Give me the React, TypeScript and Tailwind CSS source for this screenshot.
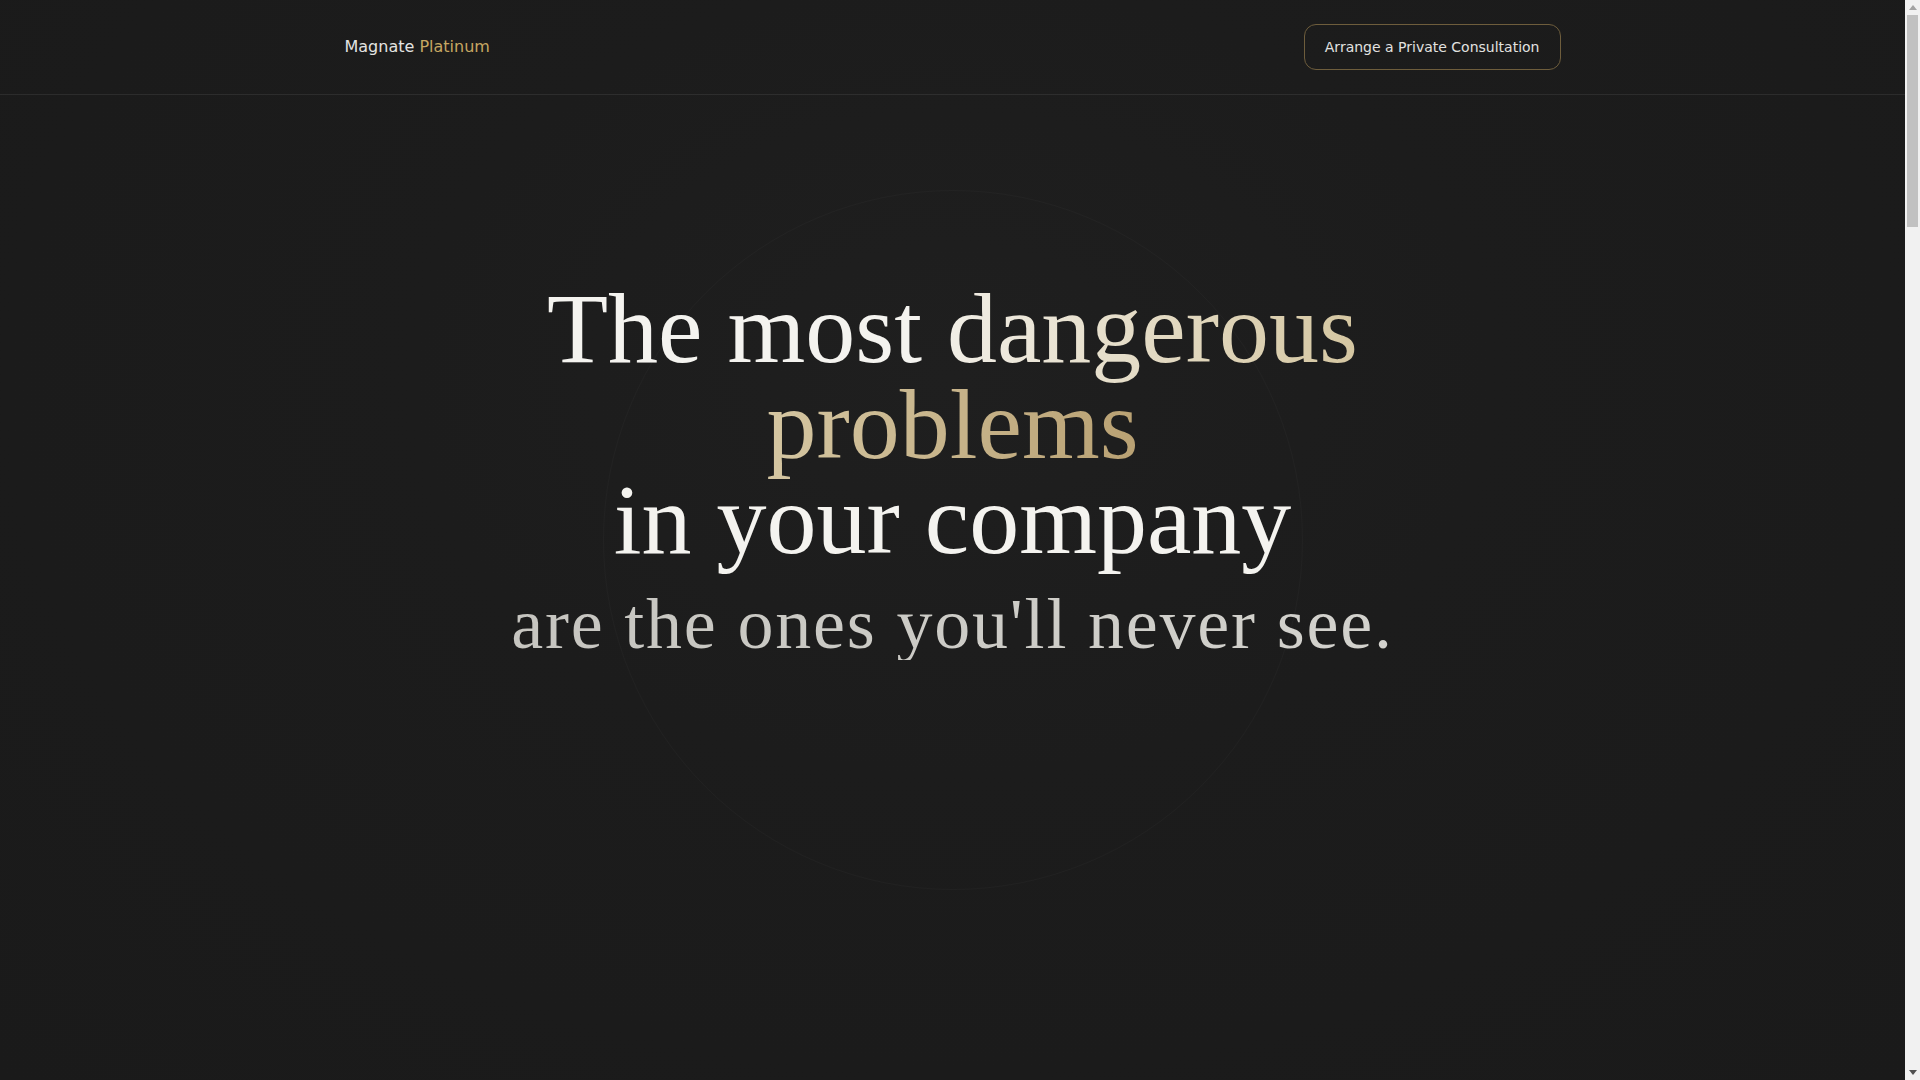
import React from "react";

function FakeScrollbar() {
  return (
    <div className="flex h-screen w-[15px] shrink-0 flex-col bg-[#f1f1f1]">
      <div className="flex h-[15px] items-center justify-center">
        <svg width="8" height="5" viewBox="0 0 8 5">
          <path d="M0 5 L4 0 L8 5 Z" fill="#a3a3a3" />
        </svg>
      </div>
      <div className="mx-[2px] h-[212px] bg-[#c1c1c1]" />
      <div className="flex-1" />
      <div className="flex h-[15px] items-center justify-center">
        <svg width="8" height="5" viewBox="0 0 8 5">
          <path d="M0 0 L8 0 L4 5 Z" fill="#505050" />
        </svg>
      </div>
    </div>
  );
}

export default function App() {
  return (
    <div className="flex h-screen overflow-hidden bg-[#1b1b1b]">
      <div className="relative h-screen flex-1 overflow-hidden">
        {/* soft radial light */}
        <div className="pointer-events-none absolute inset-0 bg-[radial-gradient(ellipse_at_50%_35%,#1f1f1f_0%,#1c1c1c_40%,#1a1a1a_100%)]" />
        {/* decorative ring */}
        <div className="pointer-events-none absolute left-1/2 top-[190px] h-[700px] w-[700px] -translate-x-1/2 rounded-full border border-white/[0.022]" />

        <header className="relative z-10 border-b border-white/[0.08] font-['DejaVu_Sans',sans-serif]">
          <div className="mx-auto flex h-[94px] max-w-7xl items-center justify-between px-8">
            <div className="text-base text-[#e4e4e2]">
              Magnate <span className="text-[#c6a762]">Platinum</span>
            </div>
            <button className="rounded-xl border border-[#6e5d3c] px-5 py-3 text-sm leading-5 text-[#e2e2e0]">
              Arrange a Private Consultation
            </button>
          </div>
        </header>

        <main className="relative z-10">
          <section className="flex flex-col items-center pt-[186px] text-center font-['Liberation_Serif',serif]">
            <h1 className="text-[100px] leading-[0.955] font-normal text-[#f4f3ef]">
              The most{" "}
              <span className="bg-linear-to-r from-[#f1eee6] via-[#d6c8a4] to-[#b9a173] bg-clip-text text-transparent">
                dangerous
                <br />
                problems
              </span>
              <br />
              in your company
            </h1>
            <p className="mt-5 text-7xl leading-none tracking-wide bg-linear-to-r from-[#c6c5c0] to-[#d3d2cd] bg-clip-text text-transparent">
              are the ones you'll never see.
            </p>
          </section>
        </main>
      </div>
      <FakeScrollbar />
    </div>
  );
}
